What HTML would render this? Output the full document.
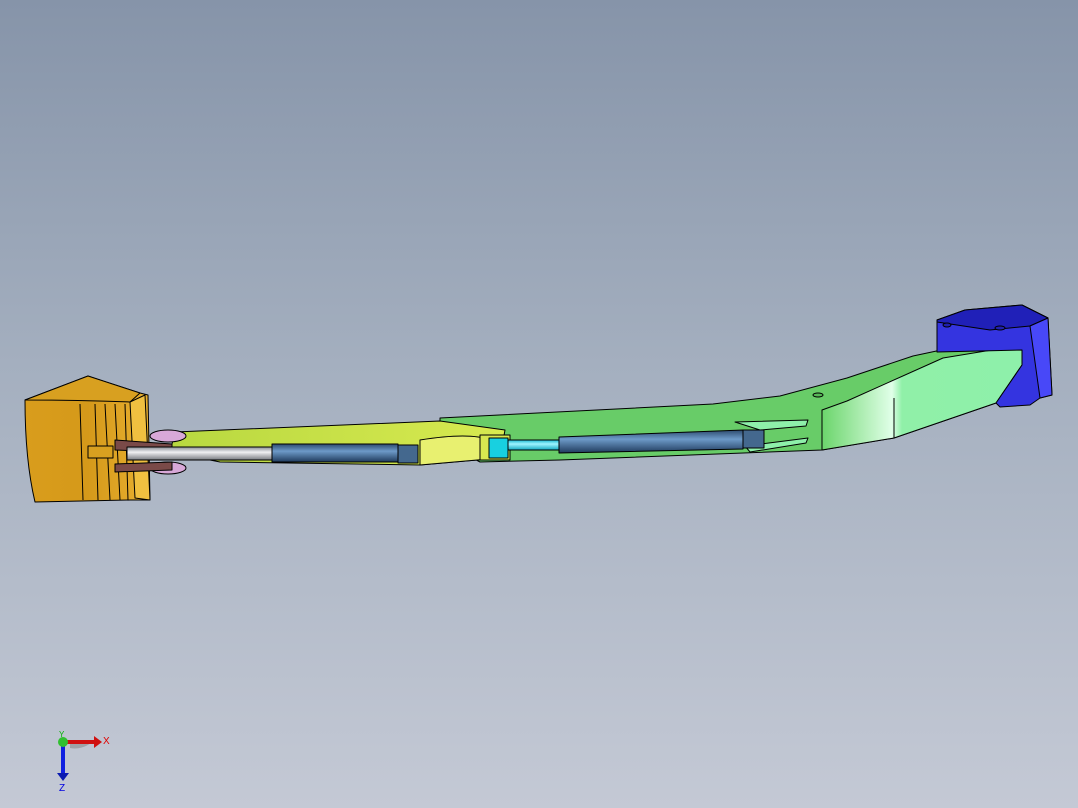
<!DOCTYPE html>
<html><head><style>
html,body{margin:0;padding:0;width:1078px;height:808px;overflow:hidden}
body{background:linear-gradient(to bottom,#8694a9 0%,#a4afbf 45%,#c4c9d5 100%)}
svg{position:absolute;left:0;top:0}
text{font-family:"Liberation Sans",sans-serif}
</style></head><body>
<svg width="1078" height="808" viewBox="0 0 1078 808">
<defs>
<linearGradient id="cyl" x1="0" y1="0" x2="0" y2="1"><stop offset="0" stop-color="#2c4a6e"/><stop offset=".4" stop-color="#6d9ac8"/><stop offset="1" stop-color="#1f3a5c"/></linearGradient>
<linearGradient id="rod" x1="0" y1="0" x2="0" y2="1"><stop offset="0" stop-color="#8a8e95"/><stop offset=".4" stop-color="#f0f0f2"/><stop offset="1" stop-color="#777a80"/></linearGradient>
<linearGradient id="cyan" x1="0" y1="0" x2="0" y2="1"><stop offset="0" stop-color="#18b8d0"/><stop offset=".4" stop-color="#9ff4ff"/><stop offset="1" stop-color="#10a8c0"/></linearGradient>
<linearGradient id="face" x1="0" y1="0" x2="1" y2="0"><stop offset="0" stop-color="#6bd56b"/><stop offset=".35" stop-color="#e0ffe8"/><stop offset=".4" stop-color="#90f0a8"/><stop offset="1" stop-color="#8ef0aa"/></linearGradient>
<linearGradient id="buck" x1="0" y1="0" x2="1" y2="0"><stop offset="0" stop-color="#d99d1c"/><stop offset=".5" stop-color="#d5991a"/><stop offset="1" stop-color="#e8b030"/></linearGradient>
<linearGradient id="ylw" x1="0" y1="0" x2="1" y2="0"><stop offset="0" stop-color="#b8d840"/><stop offset="1" stop-color="#d8ea50"/></linearGradient>
</defs>
<g stroke="#000" stroke-width="1" stroke-linejoin="round">
<!-- green boom -->
<path d="M440,418 L713,404 L780,396 L847,378 L913,356 L960,346 L1022,345 L1022,365 L996,403 L894,438 L822,450 L560,460 L480,462 L440,440 Z" fill="#68cc68"/>
<path d="M822,410 L847,401 L943,358 L1022,345 L1022,365 L996,403 L894,438 L822,450 Z" fill="url(#face)"/>
<line x1="894" y1="398" x2="894" y2="438"/>
<line x1="822" y1="410" x2="822" y2="450"/>
<ellipse cx="818" cy="395" rx="5" ry="2" fill="#58b858"/>
<path d="M735,422 L808,420 L806,426 L760,430 Z M745,446 L808,438 L806,443 L750,452 Z" fill="#8ef0aa"/>
<!-- bucket -->
<path d="M25,400 L88,376 L100,380 L140,393 L148,395 L150,500 L130,500 L35,502 Q25,460 25,400 Z" fill="url(#buck)"/>
<path d="M25,400 L88,376 L140,393 L130,402 Q80,400 25,400 Z" fill="#d8a020"/>
<path d="M130,402 L145,395 L150,500 L135,498 Z" fill="#f0c040"/>
<g fill="none"><path d="M80,404 L83,500 M95,404 L98,500 M105,404 L110,500 M115,404 L120,500 M125,404 L128,500"/></g>
<rect x="88" y="446" width="25" height="12" fill="#d8a020"/>
<!-- yellow stick -->
<path d="M175,432 L440,421 L505,430 L500,458 L420,465 L220,462 L170,452 Z" fill="url(#ylw)"/>
<path d="M420,440 Q470,432 490,440 L500,458 L420,465 Z" fill="#e8f070"/>
<ellipse cx="168" cy="436" rx="18" ry="6" fill="#d8a8d8"/>
<ellipse cx="168" cy="468" rx="18" ry="6" fill="#d8a8d8"/>
<path d="M115,440 L172,444 L172,452 L115,450 Z M115,464 L172,462 L172,470 L115,472 Z" fill="#7a4a48"/>
<rect x="127" y="447" width="145" height="13" fill="url(#rod)"/>
<rect x="272" y="444" width="126" height="18" fill="url(#cyl)"/>
<rect x="398" y="445" width="20" height="18" fill="#44688e"/>
<!-- cyan and dark cylinder -->
<rect x="480" y="435" width="30" height="25" fill="#d8e850"/>
<rect x="508" y="440" width="51" height="10" fill="url(#cyan)"/>
<rect x="489" y="438" width="19" height="20" fill="#18d0e0"/>
<path d="M559,437 L743,430 L743,449 L559,453 Z" fill="url(#cyl)"/>
<rect x="743" y="430" width="21" height="18" fill="#44688e"/>
<!-- blue block -->
<path d="M937,320 L965,310 L1022,305 L1048,318 L1052,395 L1040,398 L1030,405 L1000,407 L996,403 L1022,365 L1022,350 L937,352 Z" fill="#3434e0"/>
<path d="M937,320 L965,310 L1022,305 L1048,318 L1030,326 L990,330 L937,322 Z" fill="#2020b8"/>
<path d="M1030,326 L1048,318 L1052,395 L1040,398 Z" fill="#4848f8"/>
<ellipse cx="947" cy="325" rx="4" ry="2" fill="#2020b0"/>
<ellipse cx="1000" cy="328" rx="5" ry="2" fill="#2020b0"/>
</g>
<!-- axis triad -->
<path d="M70,748 A26,26 0 0 0 92,742 L70,742 Z" fill="#888" opacity=".6"/>
<rect x="61" y="742" width="4" height="32" fill="#1020e0"/>
<path d="M57,773 L69,773 L63,781 Z" fill="#0a1ab0"/>
<rect x="63" y="740" width="32" height="4" fill="#d01010"/>
<path d="M94,736 L102,742 L94,748 Z" fill="#d01010"/>
<circle cx="63" cy="742" r="5" fill="#30c030"/>
<text x="103" y="744" font-size="10" fill="#e00000">X</text>
<text x="59" y="791" font-size="10" fill="#0000e0">Z</text>
<text x="59" y="737" font-size="8" fill="#00b000">Y</text>
</svg>
</body></html>
